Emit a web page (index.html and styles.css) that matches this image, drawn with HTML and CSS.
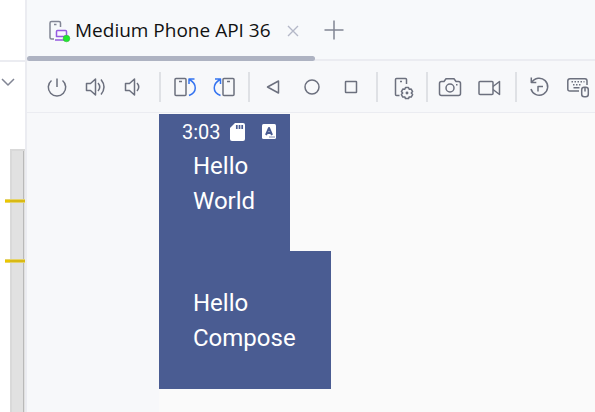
FILE: index.html
```html
<!DOCTYPE html>
<html lang="en">
<head>
<meta charset="utf-8">
<title>Running Devices</title>
<link rel="stylesheet" href="styles.css">
</head>
<body>
<div class="window">
  <aside class="editor">
    <div class="editor-head"></div>
    <button class="chevron" aria-label="Expand"><svg width="14" height="8" viewBox="0 0 14 8"><path d="M1 1l6 6 6-6"/></svg></button>
    <div class="track">
      <span class="mark mark-first"></span>
      <span class="mark mark-second"></span>
    </div>
  </aside>
  <main class="panel">
    <header class="tabs">
      <div class="tab">
        <svg class="tab-icon" width="24" height="24" viewBox="0 0 24 24">
          <path class="gray" d="M6 20H3.500Q2 20 2 18.500V4Q2 2.500 3.500 2.500H11Q12.500 2.500 12.500 4V8M6 5.500h2.500"/>
          <path class="purple" d="M9.500 11.500h8q1 0 1 1v5H8.500v-5q0-1 1-1zM7 21h10"/>
          <circle cx="18.500" cy="19.500" r="3.300" fill="#20e830" stroke="#35b33c" stroke-width=".6"/>
        </svg>
        <span class="tab-title">Medium Phone API 36</span>
        <button class="close" aria-label="Close tab"><svg width="12" height="12" viewBox="0 0 12 12"><path d="M1 1l10 10M11 1L1 11"/></svg></button>
      </div>
      <button class="add" aria-label="New tab"><svg width="20" height="20" viewBox="0 0 20 20"><path d="M10 .5v19M.5 10h19"/></svg></button>
    </header>
    <nav class="toolbar" aria-label="Device controls">
      <button aria-label="Power"><svg viewBox="0 0 29 29"><path d="M9.500 8.500A8.700 8.700 0 1 0 20.500 8.500M15 6.500V15"/></svg></button>
      <button aria-label="Volume up"><svg viewBox="0 0 29 29"><path d="M5.500 11.500h4l5-4.500v16l-5-4.500h-4zM17 11q3.500 4 0 8M20 7.500q6 7.500 0 15"/></svg></button>
      <button aria-label="Volume down"><svg viewBox="0 0 29 29"><path d="M5.500 11.500h4l5-4.500v16l-5-4.500h-4zM17 11q3.500 4 0 8"/></svg></button>
      <span class="sep"></span>
      <button aria-label="Rotate left"><svg viewBox="0 0 29 29"><rect x="5" y="6.500" width="11" height="17" rx="1"/><path d="M9 9.500h3"/><path class="blue" d="M19 23.500C27.500 20 27 12 19.500 7.500M19 12V7h5.500"/></svg></button>
      <button aria-label="Rotate right"><svg viewBox="0 0 29 29"><rect x="14" y="6.500" width="11" height="17" rx="1"/><path d="M18 9.500h3"/><path class="blue" d="M11.500 23.500C3 20 3.500 12 11 7.500M11.500 12V7H6"/></svg></button>
      <span class="sep"></span>
      <button aria-label="Back"><svg viewBox="0 0 29 29"><path d="M8.500 15l11-6v12z"/></svg></button>
      <button aria-label="Home"><svg viewBox="0 0 29 29"><circle cx="14" cy="15" r="7"/></svg></button>
      <button aria-label="Overview"><svg viewBox="0 0 29 29"><rect x="8.500" y="9.500" width="11" height="11" rx=".5"/></svg></button>
      <span class="sep"></span>
      <button aria-label="Device settings"><svg viewBox="0 0 29 29"><path d="M12.500 23.500h-3q-1 0-1-1v-15q0-1 1-1h9q1 0 1 1V12M13 9.500h2"/><path d="M18.500 15.500h3l.7 1.800 2-.2 1.400 2.500-1.300 1.500 1.300 1.500-1.400 2.500-2-.2-.7 1.700h-3l-.7-1.700-2 .2-1.400-2.500 1.300-1.500-1.300-1.500 1.400-2.500 2 .2z"/><circle cx="20" cy="21" r=".7"/></svg></button>
      <span class="sep"></span>
      <button aria-label="Take screenshot"><svg viewBox="0 0 29 29"><path d="M4.500 9.500H7L9 6.700h8l2 2.800h2.500q2 0 2 2v10q0 2-2 2h-17q-2 0-2-2v-10q0-2 2-2z"/><circle cx="13" cy="16" r="4"/><path d="M19 12.700h1.500"/></svg></button>
      <button aria-label="Record screen"><svg viewBox="0 0 29 29"><rect x="3" y="9.500" width="14" height="13" rx="1"/><path d="M17 14.500l6.500-5v13l-6.500-5"/></svg></button>
      <span class="sep"></span>
      <button aria-label="Reset"><svg viewBox="0 0 29 29"><path d="M5.800 10.500a8.500 8.500 0 1 1-.8 6.500M5.300 5.500v5h5M12 19.500v-5h5"/></svg></button>
      <button aria-label="Hardware input"><svg viewBox="0 0 29 29"><path d="M14 19H5q-2.200 0-2.200-2V9q0-2.300 2.200-2.300h15q2 0 2 2.300v4M8.500 15.800h6"/><path class="keys" d="M6.500 9.800h13M8 12.800h9"/><rect x="16.700" y="15.300" width="6.600" height="9.500" rx="2.500"/><path d="M20 15.500v4"/></svg></button>
    </nav>
    <div class="stage">
      <section class="screen">
        <div class="activity top">
          <div class="status">
            <span>3:03</span>
            <svg width="15" height="18" viewBox="0 0 15 18"><path fill="#fff" d="M5 0h8q2 0 2 2v14q0 2-2 2H2q-2 0-2-2V5z"/><path stroke="#4a5c92" stroke-width="1.700" d="M6.800 2v4M9.500 2v4M12.200 2v4"/></svg>
            <svg class="caption" width="14" height="15" viewBox="0 0 14 15"><rect width="14" height="15" rx="1.500" fill="#fff"/><path fill="none" stroke="#4a5c92" stroke-width="2" d="M4 11L7 4l3 7M5 9h4"/><path stroke="#4a5c92" stroke-width=".7" d="M7 13h6"/></svg>
          </div>
          <p>Hello World</p>
        </div>
        <div class="activity bottom"><p>Hello Compose</p></div>
      </section>
    </div>
  </main>
</div>
</body>
</html>
```

FILE: styles.css
```css
* { box-sizing: border-box; }
body { margin: 0; background: #fff; font-family: "Open Sans", "Noto Sans", sans-serif; }
button { display: flex; align-items: center; justify-content: center; padding: 0; border: 0; background: none; }
svg { flex: none; fill: none; stroke-linejoin: round; }

.window { display: flex; min-height: 100vh; }
.editor { display: flex; flex: none; flex-direction: column; width: 27px; border-right: 2px solid #ebecf1; }
.editor-head { height: 62px; border-bottom: 2px solid #ebecf1; }
.chevron { width: 16px; height: 40px; }
.chevron path { stroke: #818594; stroke-width: 1.5; }
.track {
  position: relative;
  flex: 1;
  width: 15px;
  margin: 47px 0 0 10px;
  border: 2px solid #d9d9d9;
  border-width: 2px 0 0 2px;
  background: linear-gradient(#b9b9b9, #b9b9b9) 11px 0 / 1px 100% no-repeat #e1e1e1;
}
.mark { position: absolute; left: -7px; width: 20px; height: 4px; background: linear-gradient(90deg, #ebc700 25%, #d8b915 25%); border: solid #e5d36c; border-width: 1px 0; }
.mark-first { top: 48px; }
.mark-second { top: 108px; }

.panel { display: flex; flex: 1; flex-direction: column; min-width: 0; background: #f7f8fa; }
.tabs { display: flex; height: 61px; border-bottom: 2px solid #ebecf1; background: #f7f9fb; }
.tab { position: relative; display: flex; align-items: center; height: 61px; padding: 0 16px 0 21px; }
.tab::after { content: ""; position: absolute; left: 0; right: 0; bottom: 0; height: 5px; border-radius: 3px; background: #aeb3c2; }
.tab-icon { margin-right: 3px; }
.gray { stroke: #818594; stroke-width: 1.5; }
.purple { stroke: #955ae0; stroke-width: 1.5; fill: #faf5ff; }
.tab-title { color: #111; font-size: 19px; line-height: 24px; padding-bottom: 2px; white-space: nowrap; }
.close { margin-left: 16px; }
.close path { stroke: #b4b8c8; stroke-width: 1.4; }
.add { width: 38px; }
.add path { stroke: #818594; stroke-width: 1.5; }

.toolbar { display: flex; align-items: center; height: 52px; padding-left: 10px; border-bottom: 1px solid #ebecf1; overflow: hidden; }
.toolbar button { flex: none; width: 39px; height: 39px; }
.toolbar svg { width: 29px; height: 29px; stroke: #6c707e; stroke-width: 1.5; }
.toolbar .blue { stroke: #3574f0; }
.toolbar .keys { stroke-dasharray: 1.5 1.5; }
.sep { flex: none; width: 2px; height: 30px; margin: 0 4px 0 5px; background: #dfe1e5; }

.stage { display: flex; flex: 1; padding-left: 132px; }
.screen { flex: 1; padding-top: 1px; background: #fafafa; color: #fff; font-family: Roboto, sans-serif; }
.activity { background: #4a5c92; }
.top { width: 131px; height: 137px; }
.bottom { width: 172px; height: 138px; padding-top: 35px; }
.status { display: flex; align-items: center; height: 35px; padding-left: 23px; font-size: 20px; }
.status svg { margin-left: 9px; }
.status .caption { margin-left: 17px; }
.activity p { width: 102px; margin: 0 0 0 34px; font-size: 24px; line-height: 35px; }
.top p { width: 80px; }
```
